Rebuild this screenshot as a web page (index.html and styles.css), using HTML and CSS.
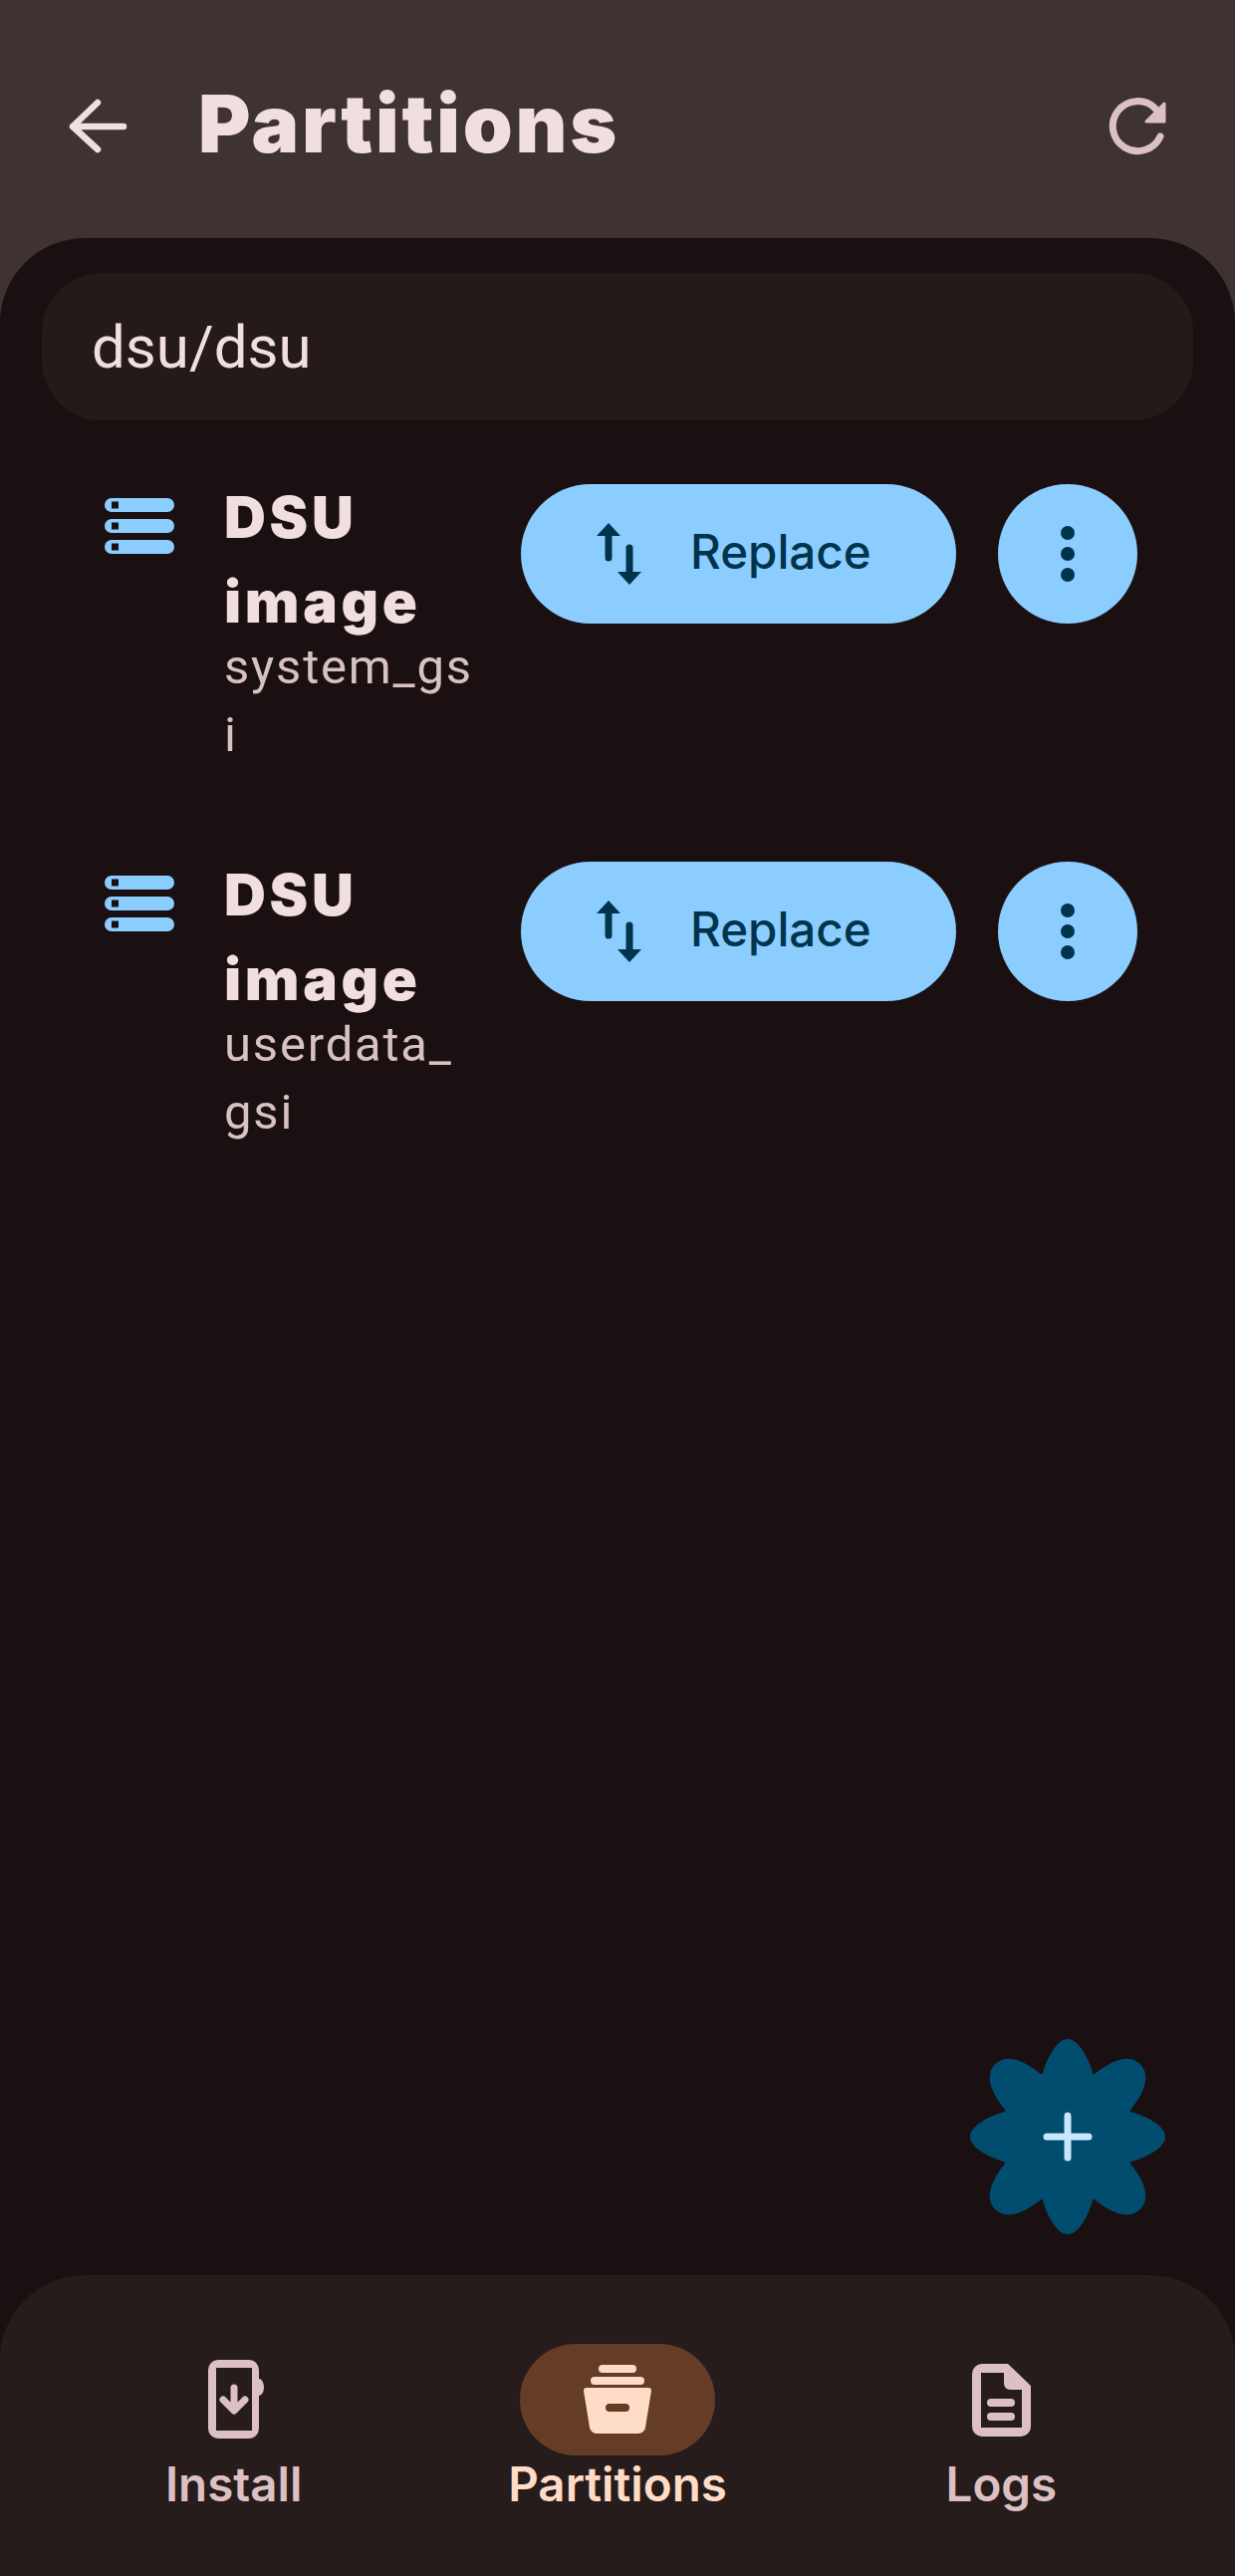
FILE: index.html
```html
<!DOCTYPE html>
<html lang="en">
<head>
    <meta charset="UTF-8">
    <title>Partitions</title>
    <link rel="stylesheet" href="styles.css">
</head>
<body>
    <header class="topbar">
        <svg class="icon-72 line-light" viewBox="0 0 72 72"><path d="M62 36H11M36 12L11 36L36 59"/></svg>
        <h1 class="title">Partitions</h1>
        <svg class="icon-72 refresh" viewBox="0 0 72 72">
            <path class="refresh-arc" d="M59 46A25 25 0 1 1 54 18"/>
            <path class="refresh-head" d="M63 13V31H45Z"/>
        </svg>
    </header>

    <main class="content">
        <div class="path-bar">dsu/dsu</div>

        <ul class="list">
            <li class="item">
                <svg class="server" viewBox="0 0 70 56">
                    <rect class="bar" width="70" height="14" rx="7"/><rect class="bar" y="21" width="70" height="14" rx="7"/><rect class="bar" y="42" width="70" height="14" rx="7"/>
                    <rect class="led" x="7" y="3.5" width="7" height="7"/><rect class="led" x="7" y="24.5" width="7" height="7"/><rect class="led" x="7" y="45.5" width="7" height="7"/>
                </svg>
                <div class="item-text">
                    <div class="item-name">DSU image</div>
                    <div class="item-sub">system_gsi</div>
                </div>
                <button class="replace">
                    <svg class="swap" viewBox="0 0 60 70">
                        <path d="M18 7L30 20H6Z"/><path d="M39 69L27 56H51Z"/>
                        <path class="swap-stem" d="M18 18V42M39 32V58"/>
                    </svg>
                    Replace
                </button>
                <button class="more"><span class="dot"></span><span class="dot"></span><span class="dot"></span></button>
            </li>
            <li class="item">
                <svg class="server" viewBox="0 0 70 56">
                    <rect class="bar" width="70" height="14" rx="7"/><rect class="bar" y="21" width="70" height="14" rx="7"/><rect class="bar" y="42" width="70" height="14" rx="7"/>
                    <rect class="led" x="7" y="3.5" width="7" height="7"/><rect class="led" x="7" y="24.5" width="7" height="7"/><rect class="led" x="7" y="45.5" width="7" height="7"/>
                </svg>
                <div class="item-text">
                    <div class="item-name">DSU image</div>
                    <div class="item-sub">userdata_gsi</div>
                </div>
                <button class="replace">
                    <svg class="swap" viewBox="0 0 60 70">
                        <path d="M18 7L30 20H6Z"/><path d="M39 69L27 56H51Z"/>
                        <path class="swap-stem" d="M18 18V42M39 32V58"/>
                    </svg>
                    Replace
                </button>
                <button class="more"><span class="dot"></span><span class="dot"></span><span class="dot"></span></button>
            </li>
        </ul>

        <!-- Flower shaped add button -->
        <button class="fab">
            <svg viewBox="-100 -100 200 200">
                <g class="petals">
                    <circle r="68"/>
                    <path d="M-25.6 -62C-21 -79 -11 -98 0 -98C11 -98 21 -79 25.6 -62Z"/>
                    <path d="M-25.6 -62C-24 -80 -18 -103 0 -103C18 -103 24 -80 25.6 -62Z" transform="rotate(45)"/>
                    <path d="M-25.6 -62C-21 -79 -11 -98 0 -98C11 -98 21 -79 25.6 -62Z" transform="rotate(90)"/>
                    <path d="M-25.6 -62C-24 -80 -18 -103 0 -103C18 -103 24 -80 25.6 -62Z" transform="rotate(135)"/>
                    <path d="M-25.6 -62C-21 -79 -11 -98 0 -98C11 -98 21 -79 25.6 -62Z" transform="rotate(180)"/>
                    <path d="M-25.6 -62C-24 -80 -18 -103 0 -103C18 -103 24 -80 25.6 -62Z" transform="rotate(225)"/>
                    <path d="M-25.6 -62C-21 -79 -11 -98 0 -98C11 -98 21 -79 25.6 -62Z" transform="rotate(270)"/>
                    <path d="M-25.6 -62C-24 -80 -18 -103 0 -103C18 -103 24 -80 25.6 -62Z" transform="rotate(315)"/>
                </g>
                <path class="plus" d="M-21 0H21M0 -21V21"/>
            </svg>
        </button>

        <nav class="nav">
            <div class="nav-item">
                <div class="nav-icon">
                    <svg class="icon-88" viewBox="0 0 88 88">
                        <path fill-rule="evenodd" d="M28 4H59A10 10 0 0 1 69 14V23A5 8.5 0 0 1 69 40V73A10 10 0 0 1 59 83H28A10 10 0 0 1 18 73V14A10 10 0 0 1 28 4ZM26 12V75H62V12Z"/>
                        <path class="nav-arrow" d="M44 32V52M33 44L44 55L55 44"/>
                    </svg>
                </div>
                <span class="nav-label">Install</span>
            </div>
            <div class="nav-item active">
                <div class="nav-icon">
                    <svg class="icon-88" viewBox="0 0 88 88">
                        <rect x="25" y="9" width="38" height="8" rx="4"/>
                        <rect x="17" y="21" width="54" height="8" rx="4"/>
                        <path d="M13 32H75A3 3 0 0 1 78 35L72 72A7 7 0 0 1 65 78H23A7 7 0 0 1 16 72L10 35A3 3 0 0 1 13 32Z"/>
                        <rect class="slot" x="32" y="48" width="24" height="8" rx="4"/>
                    </svg>
                </div>
                <span class="nav-label">Partitions</span>
            </div>
            <div class="nav-item">
                <div class="nav-icon">
                    <svg class="icon-88" viewBox="0 0 88 88">
                        <path fill-rule="evenodd" d="M25 8H51L74 30V71A10 10 0 0 1 64 81H25A10 10 0 0 1 15 71V18A10 10 0 0 1 25 8ZM24 17V72H65V34H53A6 6 0 0 1 47 28V17Z"/>
                        <rect x="30" y="43" width="28" height="8" rx="4"/>
                        <rect x="30" y="57" width="28" height="8" rx="4"/>
                    </svg>
                </div>
                <span class="nav-label">Logs</span>
            </div>
        </nav>
    </main>
</body>
</html>
```

FILE: styles.css
```css
* {
    box-sizing: border-box;
}
body {
    margin: 0;
    width: 1240px;
    height: 2586px;
    display: flex;
    flex-direction: column;
    background-color: #3e3233;
    font-family: Roboto, sans-serif;
    color: #f0dee0;
}
button {
    border: none;
    padding: 0;
    font-family: inherit;
}

/* Top bar */
.topbar {
    height: 239px;
    flex-shrink: 0;
    display: flex;
    align-items: center;
    padding: 15px 62px 0;
}
.icon-72 {
    width: 72px;
    height: 72px;
    flex-shrink: 0;
}
.line-light {
    fill: none;
    stroke: #f0dee0;
    stroke-width: 6.5;
    stroke-linecap: round;
    stroke-linejoin: round;
}
.title {
    flex: 1;
    margin: 0 0 6px 65px;
    font-family: Inter, sans-serif;
    font-size: 80px;
    font-weight: 900;
    letter-spacing: 2.8px;
    line-height: 96px;
}
.refresh-arc {
    fill: none;
    stroke: #dcc0c3;
    stroke-width: 7;
    stroke-linecap: round;
}
.refresh-head {
    fill: #dcc0c3;
    stroke: #dcc0c3;
    stroke-width: 3;
    stroke-linejoin: round;
}

/* Main area */
.content {
    flex: 1;
    position: relative;
    display: flex;
    flex-direction: column;
    background-color: #1b1011;
    border-radius: 85px 85px 0 0;
}
.path-bar {
    height: 148px;
    margin: 35px 42px 0;
    padding-left: 50px;
    display: flex;
    align-items: center;
    background-color: #241a1a;
    border-radius: 60px;
    font-size: 60px;
}
.list {
    flex: 1;
    list-style: none;
    margin: 0;
    padding: 55px 98px 0 105px;
}
.item {
    display: flex;
    align-items: flex-start;
    height: 379px;
}
.server {
    width: 70px;
    height: 56px;
    margin-top: 23px;
    flex-shrink: 0;
}
.bar {
    fill: #8ccdff;
}
.led {
    fill: #1b1011;
}
.item-text {
    width: 250px;
    margin-left: 50px;
    flex-shrink: 0;
    overflow-wrap: anywhere;
}
.item-name {
    font-family: Inter, sans-serif;
    font-size: 58px;
    font-weight: 900;
    letter-spacing: 3.7px;
    line-height: 85px;
}
.item-sub {
    margin-top: -11px;
    font-size: 49px;
    letter-spacing: 1.8px;
    line-height: 68px;
    color: #d7c1c3;
}
.replace {
    width: 437px;
    height: 140px;
    margin: 9px 0 0 48px;
    flex-shrink: 0;
    display: flex;
    align-items: center;
    padding: 0 0 6px 70px;
    border-radius: 70px;
    background-color: #8ccdff;
    color: #00344d;
    font-family: Inter, sans-serif;
    font-size: 47.5px;
    font-weight: 500;
}
.swap {
    width: 60px;
    height: 70px;
    margin-right: 40px;
    fill: #00344d;
}
.swap-stem {
    fill: none;
    stroke: #00344d;
    stroke-width: 7;
    stroke-linecap: round;
}
.more {
    width: 140px;
    height: 140px;
    margin: 9px 0 0 42px;
    flex-shrink: 0;
    display: flex;
    flex-direction: column;
    align-items: center;
    justify-content: center;
    gap: 7px;
    border-radius: 50%;
    background-color: #8ccdff;
}
.dot {
    width: 14px;
    height: 14px;
    border-radius: 50%;
    background-color: #00344d;
}

/* Add button floats over the list */
.fab {
    position: absolute;
    right: 68px;
    bottom: 341px;
    width: 200px;
    height: 200px;
    background: none;
}
.petals {
    fill: #004d6f;
}
.plus {
    fill: none;
    stroke: #c9e6ff;
    stroke-width: 7;
    stroke-linecap: round;
}

/* Bottom navigation */
.nav {
    height: 302px;
    flex-shrink: 0;
    display: grid;
    grid-template-columns: repeat(3, 1fr);
    padding: 69px 42px 0;
    background-color: #271c1c;
    border-radius: 85px 85px 0 0;
}
.nav-item {
    display: flex;
    flex-direction: column;
    align-items: center;
    color: #dcc0c3;
}
.nav-icon {
    width: 196px;
    height: 112px;
    display: flex;
    align-items: center;
    justify-content: center;
    border-radius: 56px;
}
.icon-88 {
    width: 88px;
    height: 88px;
    fill: #dcc0c3;
}
.nav-arrow {
    fill: none;
    stroke: #dcc0c3;
    stroke-width: 7;
    stroke-linecap: round;
    stroke-linejoin: round;
}
.nav-label {
    margin-top: -1px;
    font-family: Inter, sans-serif;
    font-size: 47.5px;
    font-weight: 600;
    line-height: 60px;
}
.active {
    color: #ffdcc7;
}
.active .nav-icon {
    background-color: #653d27;
}
.active .icon-88 {
    fill: #ffdcc7;
}
.slot {
    fill: #653d27;
}
```
